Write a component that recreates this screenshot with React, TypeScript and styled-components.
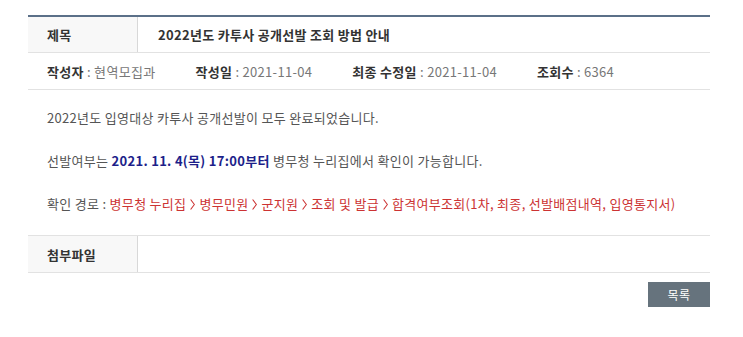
import React from 'react';
import styled, { createGlobalStyle } from 'styled-components';

const GlobalStyle = createGlobalStyle`
	html, body {
		margin: 0;
		padding: 0;
		background: #ffffff;
	}
	body {
		font-family: 'Noto Sans CJK KR', 'Noto Sans', sans-serif;
		font-size: 13px;
		letter-spacing: 0.3px;
		color: #555555;
	}
`;

const Page = styled.div`
	padding: 15px 33px 0 28px;
`;

const Board = styled.div`
	border-top: 2px solid #5b7088;
`;

const Row = styled.div`
	display: flex;
	align-items: stretch;
	border-bottom: 1px solid #e2e2e2;
	min-height: ${(p: { h: number }) => p.h}px;
`;

const Label = styled.div`
	width: 110px;
	flex: none;
	box-sizing: border-box;
	padding-left: 19px;
	display: flex;
	align-items: center;
	background: #f8f8f8;
	border-right: 1px solid #d8d8d8;
	font-weight: 700;
	color: #333333;
`;

const Value = styled.div`
	flex: 1;
	display: flex;
	align-items: center;
	padding-left: 20px;
	font-weight: ${(p: { bold?: boolean }) => (p.bold ? 700 : 400)};
	color: #333333;
`;

const Meta = styled.div`
	display: flex;
	align-items: center;
	padding-left: 19px;
	gap: 40px;
	height: 36px;
	border-bottom: 1px solid #e2e2e2;
`;

const MetaItem = styled.span`
	color: #777777;
	b {
		color: #333333;
		font-weight: 700;
	}
`;

const Body = styled.div`
	padding: 18px 19px 21px;
	border-bottom: 1px solid #e2e2e2;
	color: #555555;
	p {
		margin: 0;
		line-height: 20px;
		white-space: nowrap;
	}
	p + p {
		margin-top: 23px;
	}
`;

const Blue = styled.strong`
	color: #1d1f8a;
`;

const Red = styled.span`
	color: #cc3333;
`;

const Chevron = styled.svg`
	width: 5px;
	height: 11px;
	margin: 0 4px;
	vertical-align: -1px;
`;

const Sep = () => (
	<Chevron viewBox="0 0 5 11" aria-hidden>
		<path d="M0.6 0.5 L4.4 5.5 L0.6 10.5" fill="none" stroke="#cc3333" strokeWidth="1.1" />
	</Chevron>
);

const Footer = styled.div`
	display: flex;
	justify-content: flex-end;
	padding-top: 9px;
`;

const Button = styled.button`
	width: 62px;
	height: 25px;
	border: 0;
	background: #66737d;
	color: #ffffff;
	font-family: inherit;
	font-size: 12px;
	letter-spacing: 0.5px;
	cursor: pointer;
`;

const path = ['병무청 누리집', '병무민원', '군지원', '조회 및 발급', '합격여부조회(1차, 최종, 선발배점내역, 입영통지서)'];

const App = () => (
	<>
		<GlobalStyle />
		<Page>
			<Board>
				<Row h={35}>
					<Label>제목</Label>
					<Value bold>2022년도 카투사 공개선발 조회 방법 안내</Value>
				</Row>
				<Meta>
					<MetaItem>
						<b>작성자</b> : 현역모집과
					</MetaItem>
					<MetaItem>
						<b>작성일</b> : 2021-11-04
					</MetaItem>
					<MetaItem>
						<b>최종 수정일</b> : 2021-11-04
					</MetaItem>
					<MetaItem>
						<b>조회수</b> : 6364
					</MetaItem>
				</Meta>
				<Body>
					<p>2022년도 입영대상 카투사 공개선발이 모두 완료되었습니다.</p>
					<p>
						선발여부는 <Blue>2021. 11. 4(목) 17:00부터</Blue> 병무청 누리집에서 확인이 가능합니다.
					</p>
					<p>
						확인 경로 :{' '}
						<Red>
							{path.map((step, i) => (
								<React.Fragment key={i}>
									{i > 0 && <Sep />}
									{step}
								</React.Fragment>
							))}
						</Red>
					</p>
				</Body>
				<Row h={36}>
					<Label>첨부파일</Label>
					<Value />
				</Row>
			</Board>
			<Footer>
				<Button>목록</Button>
			</Footer>
		</Page>
	</>
);

export default App;
